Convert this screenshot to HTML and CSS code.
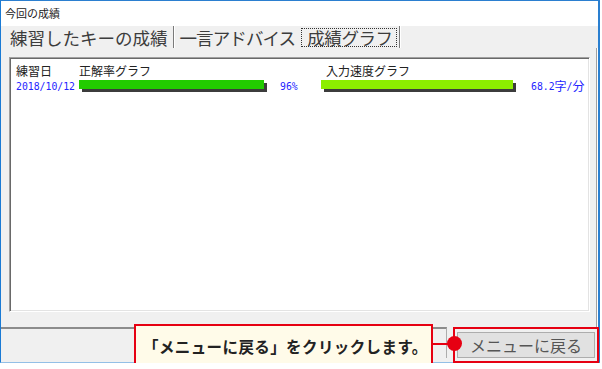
FILE: index.html
```html
<!DOCTYPE html>
<html lang="ja">
<head>
<meta charset="utf-8">
<title>今回の成績</title>
<link rel="stylesheet" href="styles.css">
</head>
<body>
<div class="window">
  <div class="titlebar">今回の成績</div>
  <div class="tabs">
    <span class="tab tab1">練習したキーの成績</span>
    <span class="tab tab2">一言アドバイス</span>
    <span class="tab tab3"><span class="focus">成績グラフ</span></span>
  </div>
  <div class="main">
    <div class="panel">
      <div class="row labels">
        <span class="c-date">練習日</span>
        <span class="c-g1">正解率グラフ</span>
        <span class="c-g2">入力速度グラフ</span>
      </div>
      <div class="row data">
        <span class="c-date num">2018/10/12</span>
        <span class="c-bar1"><span class="bar bar-green" style="width:185px"></span></span>
        <span class="c-pct num">96%</span>
        <span class="c-bar2"><span class="bar bar-lime" style="width:192px"></span></span>
        <span class="c-rate num">68.2<span class="zen">字</span>/<span class="zen">分</span></span>
      </div>
    </div>
  </div>
  <div class="bottombar">
    <div class="leftbtn"></div>
    <div class="menubtn">メニューに戻る</div>
  </div>

  <div class="callout">「メニューに戻る」をクリックします。</div>
  <div class="connector"></div>
  <div class="dot"></div>
  <div class="highlight"></div>
</div>
</body>
</html>
```

FILE: styles.css
```css
html, body {
  margin: 0;
  padding: 0;
  background: #ffffff;
}
body {
  font-family: "Noto Sans CJK JP", "Noto Sans", sans-serif;
  color: #333;
}
.window {
  position: relative;
  width: 597px;
  height: 361px;
  border-top: 1px solid #2b7fd0;
  border-left: 1px solid #1a7ad4;
  border-right: 2px solid #2a7fd0;
  border-bottom: 1px solid #93bfe6;
  background: #f0f0f0;
  display: flex;
  flex-direction: column;
}
.titlebar {
  height: 25px;
  line-height: 25px;
  background: #ffffff;
  font-size: 11px;
  color: #222;
  padding-left: 4px;
}
.tabs {
  height: 22px;
  display: flex;
  padding-left: 9px;
  font-size: 17.5px;
  color: #3c3c3c;
}
.tab {
  height: 22px;
  padding-top: 2px;
  box-sizing: border-box;
  line-height: 20px;
}
.tab1 {
  padding-right: 5px;
  border-right: 1px solid #7a7a7a;
  box-shadow: 1px 0 0 #ffffff;
}
.tab2 { padding-left: 6px; padding-right: 3px; letter-spacing: -0.9px; }
.tab3 {
  padding-left: 3px;
  padding-right: 2px;
  letter-spacing: -0.4px;
  border-right: 1px solid #7a7a7a;
  box-shadow: 1px 0 0 #ffffff;
}
.focus {
  display: inline-block;
  height: 19px;
  line-height: 19px;
  padding: 0 4px 0 6px;
  outline: 1px dotted #333;
  outline-offset: -1px;
}
.main {
  height: 279px;
  box-sizing: border-box;
  padding: 9px 6px 15px 8px;
  margin-right: 1px;
  border-right: 1px solid #a0a0a0;
  box-shadow: 1px 0 0 #ffffff;
}
.panel {
  height: 255px;
  box-sizing: border-box;
  background: #ffffff;
  border-top: 1px solid #a0a0a0;
  border-left: 1px solid #a0a0a0;
  border-right: 1px solid #ffffff;
  border-bottom: 1px solid #ffffff;
  box-shadow: inset 1px 1px 0 #696969, inset -1px -1px 0 #e3e3e3;
  padding: 6px 0 0 6px;
}
.row {
  display: flex;
  align-items: flex-start;
}
.labels {
  height: 14px;
  line-height: 14px;
  font-size: 12px;
  color: #222;
}
.c-date { width: 63px; }
.c-g1 { width: 247px; }
.data {
  height: 16px;
  line-height: 14px;
  color: #2424ff;
}
.num {
  font-family: "DejaVu Sans Mono", "Liberation Mono", monospace;
  font-size: 9.8px;
  padding-top: 2px;
}
.zen {
  font-family: "Noto Sans CJK JP", sans-serif;
  font-size: 12px;
  line-height: 1px;
  vertical-align: -1px;
}
.c-bar1 { width: 201px; padding-top: 2px; }
.c-pct { width: 41px; }
.c-bar2 { width: 210px; padding-top: 2px; }
.bar {
  display: block;
  height: 9px;
  box-shadow: 3px 3px 0 #3c3c3c;
}
.bar-green { background: #22cc00; }
.bar-lime { background: #8cee00; }
.bottombar {
  flex: 1;
  display: flex;
  align-items: flex-start;
}
.leftbtn {
  width: 446px;
  height: 31px;
  box-sizing: border-box;
  border-top: 2px solid #8c8c8c;
  border-right: 1px solid #adadad;
}
.menubtn {
  margin-left: 10px;
  margin-top: 5px;
  width: 138px;
  height: 26px;
  box-sizing: border-box;
  background: #e1e1e1;
  border: 1px solid #adadad;
  font-size: 16px;
  line-height: 24px;
  color: #555;
  text-align: center;
}
.callout {
  position: absolute;
  left: 133px;
  top: 323px;
  width: 299px;
  height: 44px;
  box-sizing: border-box;
  border: 2px solid #e60012;
  background: #fffbe9;
  font-size: 15.5px;
  letter-spacing: 0.4px;
  font-weight: 700;
  color: #222;
  line-height: 40px;
  padding-left: 7px;
  white-space: nowrap;
}
.connector {
  position: absolute;
  left: 431px;
  top: 342px;
  width: 20px;
  height: 2px;
  background: #e60012;
}
.dot {
  position: absolute;
  left: 446px;
  top: 335px;
  width: 15px;
  height: 15px;
  border-radius: 50%;
  background: #e60012;
}
.highlight {
  position: absolute;
  left: 452px;
  top: 326px;
  width: 146px;
  height: 36px;
  box-sizing: border-box;
  border: 2px solid #e60012;
}
```
